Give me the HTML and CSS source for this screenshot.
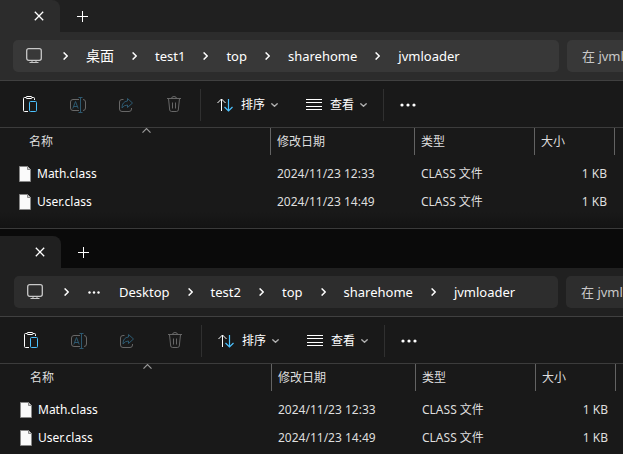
FILE: index.html
```
<!DOCTYPE html>
<html lang="zh-CN">
<head>
<meta charset="utf-8">
<meta name="viewport" content="width=device-width, initial-scale=1">
<title>jvmloader</title>
<link rel="stylesheet" href="styles.css">
</head>
<body>
<svg class="symbols" aria-hidden="true">
  <symbol id="close" viewBox="0 0 10 10"><path stroke-width="1.300" d="M.8.8l8.400 8.400M9.200.8L.8 9.200"/></symbol>
  <symbol id="plus" viewBox="0 0 11 11"><path d="M5.500 0v11M0 5.500h11"/></symbol>
  <symbol id="monitor" viewBox="0 0 16 16"><rect stroke-width="1.300" x=".7" y=".7" width="14.600" height="11.600" rx="2"/><path d="M6 12.500v2M10 12.500v2M3.500 14.500h9"/></symbol>
  <symbol id="right" viewBox="0 0 5 8"><path stroke-width="1.400" d="M.6.4L4.200 4 .6 7.600"/></symbol>
  <symbol id="down" viewBox="0 0 7 4"><path stroke-width="1.300" d="M.4.4l3.100 2.900L6.600.4"/></symbol>
  <symbol id="up" viewBox="0 0 9 5"><path stroke-width="1.200" d="M.5 4.600l4-4 4 4"/></symbol>
  <symbol id="dots" viewBox="0 0 16 4"><g class="solid"><circle cx="2" cy="2" r="1.600"/><circle cx="8" cy="2" r="1.600"/><circle cx="14" cy="2" r="1.600"/></g></symbol>
  <symbol id="paste" viewBox="0 0 16 17"><path d="M4 1.500H2.500Q1.500 1.500 1.500 2.500v12q0 1 1 1H6M10 1.500h1.500q1 0 1 1V4M5 .5h4q1 0 1 1t-1 1H5q-1 0-1-1t1-1z"/><rect class="blue" x="7.500" y="5.500" width="7" height="10" rx="1"/></symbol>
  <symbol id="rename" viewBox="0 0 16 16"><path d="M9 2.500H3Q.5 2.500 .5 5v6q0 2.500 2.500 2.500h6M13 2.500q2.500 0 2.500 2.500v6q0 2.500-2.500 2.500"/><path class="blue" d="M2.800 11.500l2.700-7 2.700 7M4 9.500h3M8.500.5h4M8.500 15.500h4M10.500.5v15"/></symbol>
  <symbol id="share" viewBox="0 0 16 16"><path d="M5.500 2.500H4Q1.500 2.500 1.500 5v7q0 2.500 2.500 2.500h7q2.500 0 2.500-2.500v-1"/><path class="blue" d="M9.500 1.500L14.500 6l-5 4.500V8Q6 8 4 11q0-6.500 5.500-7z"/></symbol>
  <symbol id="trash" viewBox="0 0 16 17"><path d="M1 2.500h14M5.500 2.500Q5.500.5 8 .5t2.500 2M2.500 2.500l1.200 11.500q.2 1.500 2 1.500h4.600q1.800 0 2-1.500l1.200-11.500M6.500 6.500v6M9.500 6.500v6"/></symbol>
  <symbol id="sort" viewBox="0 0 16 14"><path d="M4.500 13V1M.5 5l4-4 4 4"/><path class="blue" stroke-width="1.200" d="M11.500 1v12M7.500 9l4 4 4-4"/></symbol>
  <symbol id="list" viewBox="0 0 16 11"><path d="M0 .5h16M0 3.500h16M0 7.500h16M0 10.500h16"/></symbol>
  <symbol id="file" viewBox="0 0 12 16"><path fill="#fafafa" stroke="#888" d="M.5.5h8l3 3v12H.5z"/><path fill="#ccc" stroke="#888" d="M8.500.5v3h3"/></symbol>
</svg>

<main>
  <section class="window first">
    <header class="tabs">
      <div class="tab"><button class="close" aria-label="关闭"><svg class="i10"><use href="#close"/></svg></button></div>
      <button class="new-tab" aria-label="新标签页"><svg class="i11"><use href="#plus"/></svg></button>
    </header>
    <div class="location">
      <nav class="path" aria-label="路径">
        <svg class="i16 device"><use href="#monitor"/></svg>
        <svg class="chevron"><use href="#right"/></svg>
        <a class="han" href="#">桌面</a>
        <svg class="chevron"><use href="#right"/></svg>
        <a href="#">test1</a>
        <svg class="chevron"><use href="#right"/></svg>
        <a href="#">top</a>
        <svg class="chevron"><use href="#right"/></svg>
        <a href="#">sharehome</a>
        <svg class="chevron"><use href="#right"/></svg>
        <a href="#">jvmloader</a>
      </nav>
      <input class="search" type="text" placeholder="在 jvmloader 中搜索" aria-label="搜索">
    </div>
    <div class="toolbar">
      <button class="tool" aria-label="粘贴"><svg class="i17"><use href="#paste"/></svg></button>
      <button class="tool" disabled aria-label="重命名"><svg class="i16"><use href="#rename"/></svg></button>
      <button class="tool" disabled aria-label="共享"><svg class="i16"><use href="#share"/></svg></button>
      <button class="tool" disabled aria-label="删除"><svg class="i17"><use href="#trash"/></svg></button>
      <span class="divider"></span>
      <button class="menu"><svg class="i14"><use href="#sort"/></svg><span>排序</span><svg class="caret"><use href="#down"/></svg></button>
      <button class="menu"><svg class="lines"><use href="#list"/></svg><span>查看</span><svg class="caret"><use href="#down"/></svg></button>
      <span class="divider"></span>
      <button class="menu" aria-label="更多"><svg class="more"><use href="#dots"/></svg></button>
    </div>
    <table class="files">
      <colgroup><col class="c-name"><col class="c-date"><col class="c-type"><col class="c-size"><col></colgroup>
      <thead><tr><th>名称<svg class="sorted"><use href="#up"/></svg></th><th>修改日期</th><th>类型</th><th>大小</th><td></td></tr></thead>
      <tbody>
        <tr><td><span class="name"><svg class="file"><use href="#file"/></svg>Math.class</span></td><td>2024/11/23 12:33</td><td>CLASS 文件</td><td>1 KB</td><td></td></tr>
        <tr><td><span class="name"><svg class="file"><use href="#file"/></svg>User.class</span></td><td>2024/11/23 14:49</td><td>CLASS 文件</td><td>1 KB</td><td></td></tr>
      </tbody>
    </table>
  </section>

  <section class="window second">
    <header class="tabs">
      <div class="tab"><button class="close" aria-label="关闭"><svg class="i10"><use href="#close"/></svg></button></div>
      <button class="new-tab" aria-label="新标签页"><svg class="i11"><use href="#plus"/></svg></button>
    </header>
    <div class="location">
      <nav class="path" aria-label="路径">
        <svg class="i16 device"><use href="#monitor"/></svg>
        <svg class="chevron"><use href="#right"/></svg>
        <button class="overflow" aria-label="更多路径"><svg class="small-dots"><use href="#dots"/></svg></button>
        <a href="#">Desktop</a>
        <svg class="chevron"><use href="#right"/></svg>
        <a href="#">test2</a>
        <svg class="chevron"><use href="#right"/></svg>
        <a href="#">top</a>
        <svg class="chevron"><use href="#right"/></svg>
        <a href="#">sharehome</a>
        <svg class="chevron"><use href="#right"/></svg>
        <a href="#">jvmloader</a>
      </nav>
      <input class="search" type="text" placeholder="在 jvmloader 中搜索" aria-label="搜索">
    </div>
    <div class="toolbar">
      <button class="tool" aria-label="粘贴"><svg class="i17"><use href="#paste"/></svg></button>
      <button class="tool" disabled aria-label="重命名"><svg class="i16"><use href="#rename"/></svg></button>
      <button class="tool" disabled aria-label="共享"><svg class="i16"><use href="#share"/></svg></button>
      <button class="tool" disabled aria-label="删除"><svg class="i17"><use href="#trash"/></svg></button>
      <span class="divider"></span>
      <button class="menu"><svg class="i14"><use href="#sort"/></svg><span>排序</span><svg class="caret"><use href="#down"/></svg></button>
      <button class="menu"><svg class="lines"><use href="#list"/></svg><span>查看</span><svg class="caret"><use href="#down"/></svg></button>
      <span class="divider"></span>
      <button class="menu" aria-label="更多"><svg class="more"><use href="#dots"/></svg></button>
    </div>
    <table class="files">
      <colgroup><col class="c-name"><col class="c-date"><col class="c-type"><col class="c-size"><col></colgroup>
      <thead><tr><th>名称<svg class="sorted"><use href="#up"/></svg></th><th>修改日期</th><th>类型</th><th>大小</th><td></td></tr></thead>
      <tbody>
        <tr><td><span class="name"><svg class="file"><use href="#file"/></svg>Math.class</span></td><td>2024/11/23 12:33</td><td>CLASS 文件</td><td>1 KB</td><td></td></tr>
        <tr><td><span class="name"><svg class="file"><use href="#file"/></svg>User.class</span></td><td>2024/11/23 14:49</td><td>CLASS 文件</td><td>1 KB</td><td></td></tr>
      </tbody>
    </table>
  </section>
</main>
</body>
</html>
```
FILE: styles.css
```
* { box-sizing: border-box; }

body {
  margin: 0;
  background: #0a0a0a;
  color: #fff;
  font: 12px/16px "Noto Sans", "Noto Sans CJK SC", sans-serif;
  overflow: hidden;
}

button, input { font: inherit; color: inherit; background: none; border: 0; padding: 0; margin: 0; }
button { display: flex; align-items: center; }
a { color: inherit; text-decoration: none; }

svg { display: block; flex: none; fill: none; stroke: currentColor; }
.symbols { position: absolute; width: 0; height: 0; }
.solid { fill: currentColor; stroke: none; }
.blue { stroke: var(--accent, #4cc2ff); }

.i10 { width: 10px; height: 10px; }
.i11 { width: 11px; height: 11px; }
.i14 { width: 16px; height: 14px; }
.i16 { width: 16px; height: 16px; }
.i17 { width: 16px; height: 17px; }
.lines { width: 16px; height: 11px; }
.more { width: 16px; height: 4px; }
.small-dots { width: 12px; height: 3px; }
.chevron { width: 5px; height: 8px; }
.caret { width: 7px; height: 4px; color: #b0b0b0; }
.file { width: 12px; height: 16px; }

.window {
  --bar: #2c2c2c;
  --field: #383838;
  --strip: #202020;
  --inset: 0px;
  background: #191919;
}

.first {
  background: linear-gradient(to top, #131313, #191919 16px);
  border-bottom: 1px solid #3a3a3a;
}

.second {
  --bar: #202020;
  --field: #2d2d2d;
  --strip: #0a0a0a;
  --inset: 1px;
  margin-top: 7px;
}

.tabs { display: flex; height: 32px; background: var(--strip); }

.tab {
  display: flex;
  align-items: center;
  justify-content: flex-end;
  width: calc(60px + var(--inset));
  padding-right: 16px;
  background: var(--bar);
  border-radius: 0 8px 0 0;
}

.new-tab { padding-left: 17px; }

.location {
  display: flex;
  gap: 8px;
  height: 49px;
  padding: 8px 0 8px calc(13px + var(--inset));
  background: var(--bar);
  border-bottom: 1px solid #404040;
}

.path {
  display: flex;
  flex: 1;
  align-items: center;
  gap: 18px;
  height: 32px;
  padding: 0 13px;
  background: var(--field);
  border-radius: 5px;
  font-size: 13px;
  white-space: nowrap;
}

.device { margin-right: 3px; color: #c8c8c8; }
.han { font-size: 14px; }
.overflow { margin: 0 1px; }

.search {
  width: 56px;
  height: 32px;
  padding-left: 15px;
  background: var(--field);
  border-radius: 5px 0 0 5px;
  font-size: 13px;
}

.second .search { width: 57px; }
.search::placeholder { color: #c8c8c8; opacity: 1; }

.toolbar {
  display: flex;
  align-items: center;
  height: 47px;
  padding: 1px 0 0 calc(6px + var(--inset));
  border-bottom: 1px solid #3c3c3c;
}

.tool { justify-content: center; width: 48px; height: 32px; }
.tool:disabled { --accent: #2d5970; color: #676767; }

.divider { width: 1px; height: 32px; background: #303030; }
.tool + .divider { margin-left: 2px; }

.menu { height: 32px; padding: 0 12px 0 16px; }
.menu + .menu { padding-right: 16px; }
.menu span { margin: 0 6px 0 8px; }

.files {
  width: calc(100% - var(--inset));
  margin-left: var(--inset);
  border-collapse: separate;
  border-spacing: 0;
  table-layout: fixed;
  color: #dedede;
}

.c-name { width: 271px; }
.c-date { width: 144px; }
.c-type { width: 120px; }
.c-size { width: 80px; }

th {
  position: relative;
  height: 27px;
  padding: 0 0 0 6px;
  border-right: 1px solid #636363;
  font-weight: 400;
  text-align: left;
}

th:first-child { padding-left: 29px; }
.sorted { position: absolute; top: 0; left: 142px; width: 9px; height: 5px; color: #999; }

td { height: 28px; padding: 0 0 0 6px; }
thead td { height: 27px; }
tbody::before { content: ""; display: block; height: 5px; }
tbody::after { content: ""; display: block; height: 12px; }
tbody td:first-child { padding-left: 19px; color: #fff; }
tbody td:nth-child(4) { padding-right: 8px; text-align: right; }
.name { display: flex; align-items: center; gap: 6px; }
```
